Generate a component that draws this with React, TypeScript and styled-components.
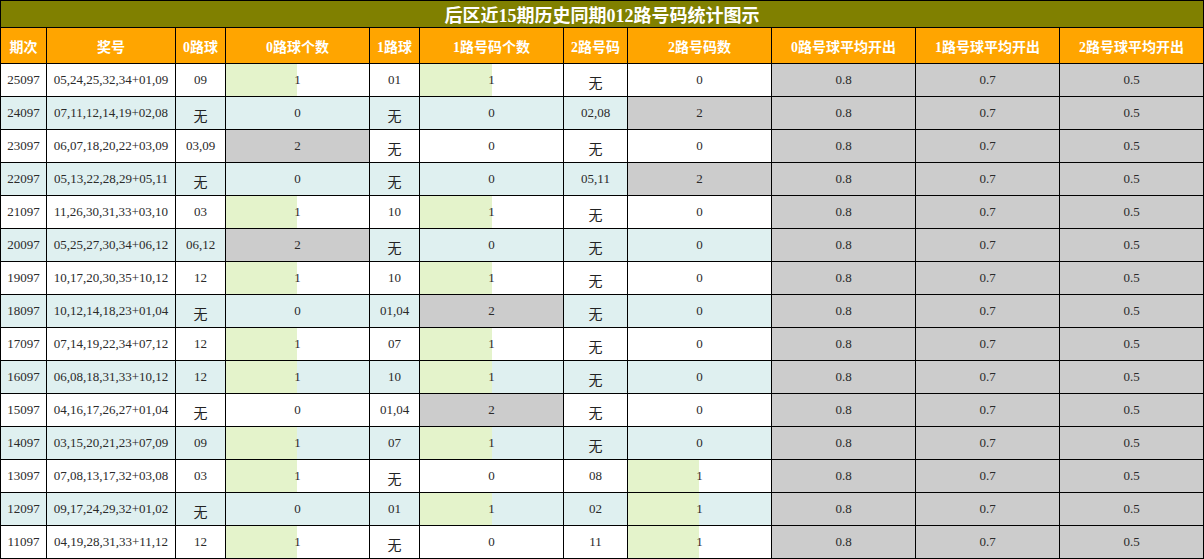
import React from "react";
import styled, { createGlobalStyle, css } from "styled-components";

const Global = createGlobalStyle`
  html, body { margin: 0; padding: 0; background: #fff; }
  body { font-family: "Liberation Serif", "Noto Sans CJK SC", serif; }
`;

const COLS = [45, 128, 49, 143, 49, 143, 63, 143, 143, 143, 143];

const Grid = styled.div`
  display: grid;
  grid-template-columns: ${COLS.map((c) => c + "px").join(" ")};
  grid-template-rows: 26px 35px repeat(15, 32px);
  gap: 1px;
  padding: 1px;
  background: #000;
  width: 1204px;
  box-sizing: border-box;
`;

const Title = styled.div`
  grid-column: 1 / -1;
  background: #808000;
  color: #fff;
  font-weight: bold;
  font-size: 18px;
  display: flex;
  align-items: center;
  justify-content: center;
  font-family: "Liberation Serif", "Noto Sans CJK SC", serif;
`;

const Head = styled.div`
  background: #ffa500;
  color: #fff;
  font-weight: bold;
  font-size: 14px;
  display: flex;
  align-items: center;
  justify-content: center;
  font-family: "Liberation Serif", "Noto Sans CJK SC", serif;
`;

type Tone = "white" | "cyan" | "gray";
const toneColor = (t: Tone) => (t === "gray" ? "#cccccc" : t === "cyan" ? "#dff0f0" : "#ffffff");

const Cell = styled.div<{ $tone: Tone; $fill?: number }>`
  display: flex;
  align-items: center;
  justify-content: center;
  font-size: 13px;
  color: #2a2a2a;
  background: ${(p) => toneColor(p.$tone)};
  ${(p) =>
    p.$fill
      ? css`
          background: linear-gradient(
            to right,
            #e4f3cb 0,
            #e4f3cb ${p.$fill}%,
            ${toneColor(p.$tone)} ${p.$fill}%
          );
        `
      : ""}
`;

const Wu = styled.span`
  font-family: "Noto Sans CJK SC", sans-serif;
  font-size: 14px;
  color: #222;
  padding-top: 4px;
`;

const headers = [
  "期次",
  "奖号",
  "0路球",
  "0路球个数",
  "1路球",
  "1路号码个数",
  "2路号码",
  "2路号码数",
  "0路号球平均开出",
  "1路号球平均开出",
  "2路号球平均开出",
];

type Row = [string, string, string, number, string, number, string, number];
const rows: Row[] = [
  ["25097", "05,24,25,32,34+01,09", "09", 1, "01", 1, "无", 0],
  ["24097", "07,11,12,14,19+02,08", "无", 0, "无", 0, "02,08", 2],
  ["23097", "06,07,18,20,22+03,09", "03,09", 2, "无", 0, "无", 0],
  ["22097", "05,13,22,28,29+05,11", "无", 0, "无", 0, "05,11", 2],
  ["21097", "11,26,30,31,33+03,10", "03", 1, "10", 1, "无", 0],
  ["20097", "05,25,27,30,34+06,12", "06,12", 2, "无", 0, "无", 0],
  ["19097", "10,17,20,30,35+10,12", "12", 1, "10", 1, "无", 0],
  ["18097", "10,12,14,18,23+01,04", "无", 0, "01,04", 2, "无", 0],
  ["17097", "07,14,19,22,34+07,12", "12", 1, "07", 1, "无", 0],
  ["16097", "06,08,18,31,33+10,12", "12", 1, "10", 1, "无", 0],
  ["15097", "04,16,17,26,27+01,04", "无", 0, "01,04", 2, "无", 0],
  ["14097", "03,15,20,21,23+07,09", "09", 1, "07", 1, "无", 0],
  ["13097", "07,08,13,17,32+03,08", "03", 1, "无", 0, "08", 1],
  ["12097", "09,17,24,29,32+01,02", "无", 0, "01", 1, "02", 1],
  ["11097", "04,19,28,31,33+11,12", "12", 1, "无", 0, "11", 1],
];

const Text = ({ v }: { v: string }) => (v === "无" ? <Wu>无</Wu> : <>{v}</>);

const Count = ({ v, base }: { v: number; base: Tone }) => {
  if (v >= 2) return <Cell $tone="gray">{v}</Cell>;
  if (v === 1) return <Cell $tone={base} $fill={50}>{v}</Cell>;
  return <Cell $tone={base}>{v}</Cell>;
};

export default function App() {
  return (
    <>
      <Global />
      <Grid>
        <Title>后区近15期历史同期012路号码统计图示</Title>
        {headers.map((h) => (
          <Head key={h}>{h}</Head>
        ))}
        {rows.map((r, i) => {
          const base: Tone = i % 2 === 1 ? "cyan" : "white";
          return (
            <React.Fragment key={r[0]}>
              <Cell $tone={base}>{r[0]}</Cell>
              <Cell $tone={base}>{r[1]}</Cell>
              <Cell $tone={base}>
                <Text v={r[2]} />
              </Cell>
              <Count v={r[3]} base={base} />
              <Cell $tone={base}>
                <Text v={r[4]} />
              </Cell>
              <Count v={r[5]} base={base} />
              <Cell $tone={base}>
                <Text v={r[6]} />
              </Cell>
              <Count v={r[7]} base={base} />
              <Cell $tone="gray">0.8</Cell>
              <Cell $tone="gray">0.7</Cell>
              <Cell $tone="gray">0.5</Cell>
            </React.Fragment>
          );
        })}
      </Grid>
    </>
  );
}
